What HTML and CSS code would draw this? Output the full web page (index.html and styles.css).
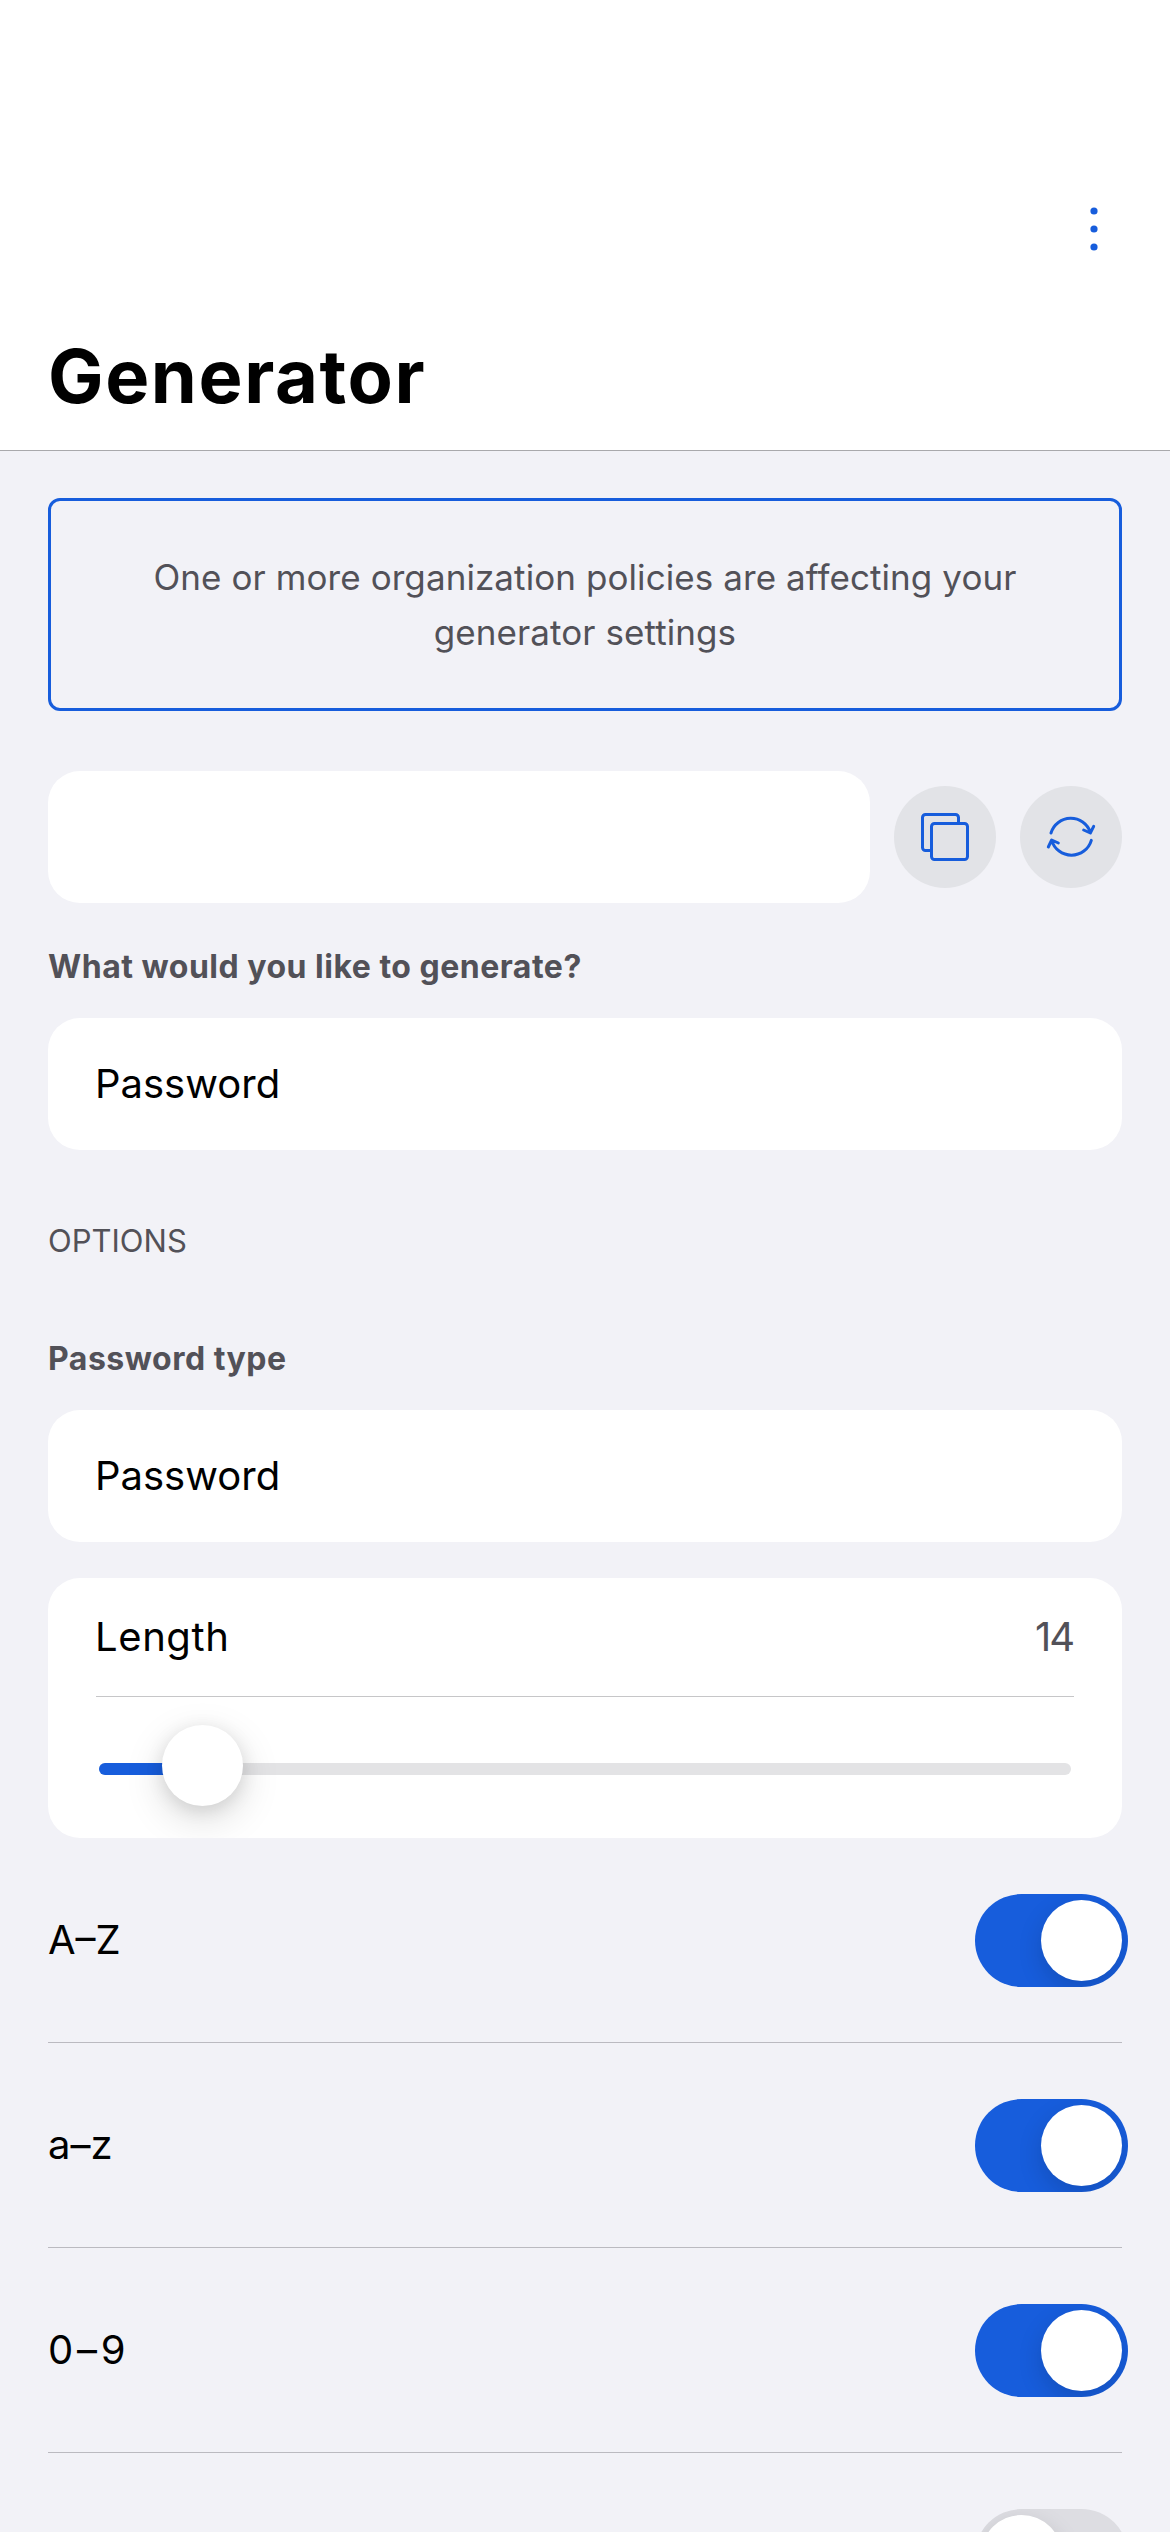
FILE: index.html
```html
<!DOCTYPE html>
<html lang="en">
<head>
<meta charset="utf-8">
<title>Generator</title>
<link rel="stylesheet" href="styles.css">
</head>
<body>
<div class="screen">
  <header class="header">
    <svg class="more" width="36" height="48" viewBox="0 0 36 48" role="img" aria-label="More">
      <circle cx="18" cy="6" r="3.6"/><circle cx="18" cy="24" r="3.6"/><circle cx="18" cy="42" r="3.6"/>
    </svg>
    <h1 class="title">Generator</h1>
  </header>
  <main class="content">
    <p class="notice">One or more organization policies are affecting your generator settings</p>

    <div class="result">
      <div class="field result-field"></div>
      <button class="round-button" aria-label="Copy">
        <svg width="102" height="102" viewBox="0 0 102 102">
          <path d="M36 64.5H31.5a3 3 0 0 1-3-3V31.5a3 3 0 0 1 3-3H61.500a3 3 0 0 1 3 3V36"/>
          <rect x="37.500" y="37.500" width="36" height="36" rx="3"/>
        </svg>
      </button>
      <button class="round-button" aria-label="Regenerate">
        <svg width="102" height="102" viewBox="0 0 306 306">
          <g class="heavy">
            <path d="M93 141A62 62 0 0 1 211 139M191 132L211 141L221 121"/>
            <path d="M214 163A62 62 0 0 1 95 163M85 183L95 162L115 171"/>
          </g>
        </svg>
      </button>
    </div>

    <div class="label">What would you like to generate?</div>
    <div class="field">Password</div>

    <h2 class="section">OPTIONS</h2>

    <div class="label">Password type</div>
    <div class="field">Password</div>

    <div class="card">
      <div class="card-head">
        <span class="length">Length</span>
        <span class="value">14</span>
      </div>
      <div class="slider">
        <div class="track"><div class="fill"></div></div>
        <div class="thumb"></div>
      </div>
    </div>

    <div class="row"><span>A–Z</span><span class="toggle on"><span class="knob"></span></span></div>
    <div class="row"><span>a–z</span><span class="toggle on"><span class="knob"></span></span></div>
    <div class="row"><span class="digits">0–9</span><span class="toggle on"><span class="knob"></span></span></div>
    <div class="row"><span></span><span class="toggle"><span class="knob"></span></span></div>
  </main>
</div>
</body>
</html>
```
FILE: styles.css
```css
* { box-sizing: border-box; }

body {
  margin: 0;
  background: #f2f2f7;
  color: #000;
  font: 400 40px/48px Inter, "Liberation Sans", sans-serif;
}

.screen {
  width: 1170px;
  height: 2532px;
  overflow: hidden;
}

.header {
  display: flex;
  flex-direction: column;
  height: 451px;
  padding: 204.5px 48px 0;
  background: #fff;
  border-bottom: 1px solid #a9a9ac;
}

.more {
  align-self: flex-end;
  margin-right: 10.5px;
  fill: #175ddc;
}

.title {
  margin: 78.5px 0 0;
  font-size: 74px;
  font-weight: 700;
  line-height: 90px;
  letter-spacing: 1.6px;
}

.content { padding: 47px 48px 0; }

.notice {
  display: flex;
  align-items: center;
  height: 213px;
  margin: 0;
  padding: 0 90px;
  border: 3px solid #175ddc;
  border-radius: 12px;
  color: #525158;
  font-size: 35px;
  line-height: 55px;
  letter-spacing: 0.08px;
  text-align: center;
}

.result {
  display: flex;
  align-items: center;
  gap: 24px;
  margin-top: 60px;
}

.field {
  display: flex;
  align-items: center;
  height: 132px;
  padding: 0 47px;
  border-radius: 32px;
  background: #fff;
}

.result-field { flex: 1; }

.round-button {
  width: 102px;
  height: 102px;
  padding: 0;
  border: 0;
  border-radius: 50%;
  background: #e2e3e7;
}

.round-button svg {
  display: block;
  fill: none;
  stroke: #175ddc;
  stroke-width: 3;
  stroke-linecap: round;
  stroke-linejoin: round;
}

.round-button .heavy { stroke-width: 9; }

.label {
  margin: 40px 0 27px;
  color: #525158;
  font-size: 32px;
  font-weight: 700;
  letter-spacing: 0.5px;
}

.section {
  margin: 67px 0 0;
  color: #525158;
  font-size: 31px;
  font-weight: 400;
}

.section + .label { margin-top: 70px; }

.card {
  height: 260px;
  margin-top: 36px;
  padding: 0 48px;
  border-radius: 32px;
  background: #fff;
  overflow: hidden;
}

.card-head {
  display: flex;
  justify-content: space-between;
  align-items: center;
  height: 119px;
  border-bottom: 1px solid #c6c6c8;
}

.length {
  margin-left: -1px;
  letter-spacing: 0.6px;
}

.value {
  margin-right: 1px;
  color: #525158;
  letter-spacing: -2px;
}

.slider {
  position: relative;
  padding: 66px 3px 0;
}

.track {
  height: 12px;
  border-radius: 6px;
  background: #e3e3e5;
}

.fill {
  width: 104px;
  height: 12px;
  border-radius: 6px;
  background: #175ddc;
}

.thumb {
  position: absolute;
  left: 66px;
  top: 28px;
  width: 81px;
  height: 81px;
  border-radius: 50%;
  background: #fff;
  box-shadow: 0 12px 39px rgba(0, 0, 0, 0.15), 0 4px 18px rgba(0, 0, 0, 0.1);
}

.row {
  display: flex;
  justify-content: space-between;
  align-items: center;
  height: 205px;
  border-bottom: 1px solid #bbbac0;
}

.digits { letter-spacing: 3.7px; }

.toggle {
  display: flex;
  width: 153px;
  height: 93px;
  margin-right: -6px;
  padding: 6px;
  border-radius: 47px;
  background: #dddde2;
  overflow: hidden;
}

.toggle.on {
  justify-content: flex-end;
  background: #175ddc;
}

.knob {
  width: 81px;
  height: 81px;
  border-radius: 50%;
  background: #fff;
  box-shadow: 0 9px 24px rgba(0, 0, 0, 0.15);
}
```
